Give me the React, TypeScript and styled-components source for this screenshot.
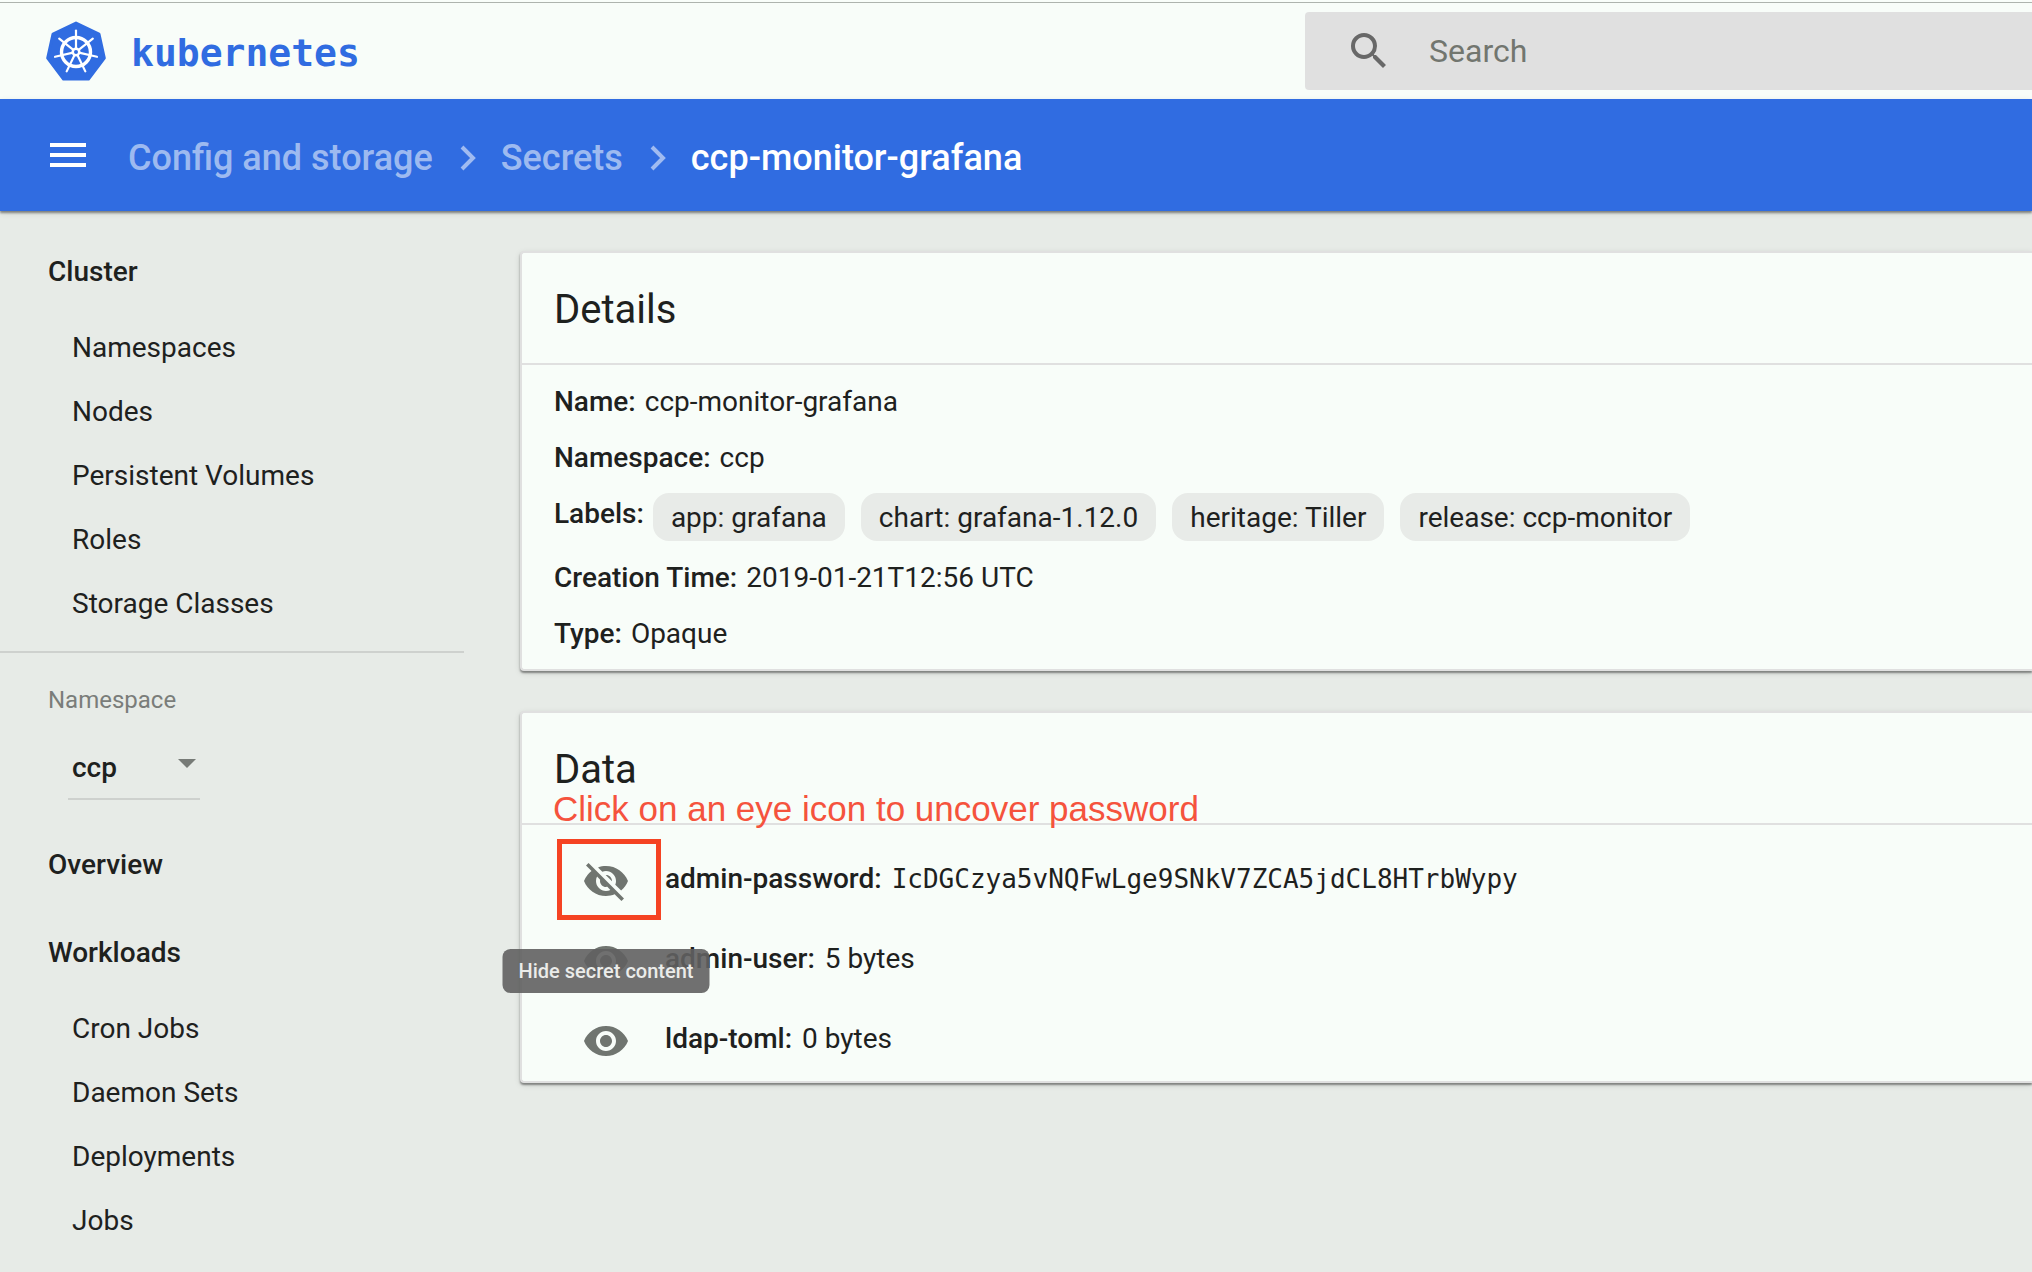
import React, { useState } from "react";
import styled, { createGlobalStyle } from "styled-components";
import { MdMenu, MdSearch, MdVisibility, MdVisibilityOff } from "react-icons/md";

const GlobalStyle = createGlobalStyle`
  *, *::before, *::after { box-sizing: border-box; }
  body {
    margin: 0;
    background: #e7ebe7;
    color: #1e211e;
    font-family: Roboto, "Liberation Sans", sans-serif;
    font-size: 28px;
    overflow: hidden;
  }
  button, input, select { font: inherit; color: inherit; }
  a { color: inherit; text-decoration: none; }
`;

const Page = styled.div`
  display: flex;
  flex-direction: column;
  height: 100vh;
  padding-top: 2px;
  background: linear-gradient(#f9fefa 2px, #e7ebe7 2px);
`;

const TopBar = styled.header`
  flex: none;
  display: flex;
  align-items: stretch;
  height: 97px;
  border-top: 1px solid #aeb4ae;
  background: #f8fdf9;
`;

const Brand = styled.a`
  flex: 0 0 1259px;
  display: flex;
  align-items: center;
  gap: 25px;
  padding-left: 46px;
  color: #306ce1;
  font: bold 38px/48px "DejaVu Sans Mono", monospace;
`;

const BrandName = styled.span`
  padding-top: 3px;
`;

const SearchBox = styled.label`
  flex: 1;
  display: flex;
  align-items: center;
  gap: 36px;
  margin: 9px 0 9px 46px;
  padding-left: 40px;
  border-radius: 4px 0 0 4px;
  background: #e0e0e0;
  color: #6b6e6b;
  font-size: 32px;

  svg { flex: none; color: #686868; }
`;

const SearchInput = styled.input`
  flex: 1;
  min-width: 0;
  padding: 0;
  border: 0;
  outline: 0;
  background: transparent;
  &::placeholder { color: #72766f; opacity: 1; }
`;

const ActionBar = styled.div`
  flex: none;
  z-index: 1;
  display: flex;
  align-items: center;
  gap: 36px;
  height: 112px;
  padding-left: 44px;
  background: #306ce1;
  box-shadow: 0 2px 2px rgba(0, 0, 0, 0.4), 0 2px 6px rgba(0, 0, 0, 0.12);
`;

const MenuButton = styled.button`
  display: flex;
  padding: 0;
  border: 0;
  background: none;
  color: #fff;
`;

const Crumbs = styled.nav`
  display: flex;
  align-items: center;
  gap: 25px;
  padding-top: 6px;
  color: rgba(255, 255, 255, 0.54);
  font-size: 36px;
  font-weight: 500;
  line-height: 48px;

  svg { flex: none; }
`;

const CurrentCrumb = styled.span`
  color: #fff;
`;

const Body = styled.div`
  flex: 1;
  min-height: 0;
  display: flex;
`;

const Sidebar = styled.nav`
  flex: 0 0 464px;
  padding-top: 17px;
`;

const NavHeading = styled.a`
  display: block;
  padding-left: 48px;
  font-weight: 500;
  line-height: 88px;
`;

const NavItem = styled.a`
  display: block;
  padding-left: 72px;
  line-height: 64px;
`;

const NamespaceSection = styled.div`
  display: flex;
  flex-direction: column;
  align-items: flex-start;
  gap: 17px;
  margin-top: 15px;
  padding: 31px 0 21px 48px;
  border-top: 2px solid #ced1ce;
`;

const NamespaceLabel = styled.label`
  color: #7a7d7a;
  font-size: 24px;
  line-height: 32px;
`;

const SelectWrap = styled.div`
  display: flex;
  align-items: center;
  width: 132px;
  height: 67px;
  margin-left: 20px;
  padding: 0 3px 3px 4px;
  border-bottom: 2px solid #ced1ce;
`;

const Select = styled.select`
  flex: 1;
  min-width: 0;
  padding: 6px 0 0;
  border: 0;
  outline: 0;
  appearance: none;
  background: transparent;
  font-weight: 500;
`;

const Content = styled.main`
  flex: 1;
  min-width: 0;
  display: flex;
  flex-direction: column;
  gap: 40px;
  padding: 40px 0 0 56px;
`;

const Card = styled.section`
  border: 2px solid #e0e0e0;
  border-right: 0;
  border-radius: 4px 0 0 4px;
  background: #f8fdf9;
  box-shadow: 0 2px 2px rgba(0, 0, 0, 0.4), 0 2px 6px rgba(0, 0, 0, 0.12);
`;

const CardTitle = styled.h2`
  margin: 0;
  padding: 4px 0 0 32px;
  border-bottom: 2px solid #e0e0e0;
  font-size: 40px;
  font-weight: 400;
  line-height: 106px;
`;

const Details = styled.dl`
  margin: 0;
  padding: 9px 32px 7px;
  line-height: 56px;
`;

const Detail = styled.div`
  display: flex;
  gap: 9px;

  dt { font-weight: 500; }
  dd { margin: 0; }
`;

const Chips = styled.dd`
  display: flex;
  flex-wrap: wrap;
  gap: 16px;
  padding: 7px 0 9px;
`;

const Chip = styled.span`
  padding: 2px 18px 0;
  border-radius: 16px;
  background: #e8ebe8;
  line-height: 46px;
`;

const SecretList = styled.div`
  padding: 16px 32px 0 44px;
`;

const Secret = styled.div`
  display: flex;
  align-items: center;
  gap: 19px;
  height: 80px;
`;

const SecretText = styled.div`
  display: flex;
  align-items: baseline;
  gap: 10px;
  padding-bottom: 5px;
`;

const SecretName = styled.span`
  font-weight: 500;
`;

const SecretValue = styled.code<{ $mono: boolean }>`
  font-family: ${(p) => (p.$mono ? '"DejaVu Sans Mono", monospace' : "inherit")};
  font-size: ${(p) => (p.$mono ? 26 : 28)}px;
`;

const EyeButton = styled.button`
  position: relative;
  flex: none;
  display: flex;
  align-items: center;
  justify-content: center;
  width: 80px;
  height: 80px;
  padding: 0;
  border: 0;
  background: none;
  color: #707570;
`;

const Tooltip = styled.span`
  position: absolute;
  z-index: 2;
  top: 108px;
  left: 50%;
  transform: translateX(-50%);
  padding: 0 16px;
  border-radius: 8px;
  background: rgba(97, 97, 97, 0.9);
  color: #ebecea;
  font-size: 20px;
  font-weight: 500;
  line-height: 44px;
  white-space: nowrap;
`;

const Highlight = styled.span`
  position: absolute;
  top: -2px;
  left: -9px;
  width: 104px;
  height: 81px;
  border: 5px solid #f54323;
`;

const TitleRow = styled.div`
  position: relative;
`;

const Note = styled.p`
  position: absolute;
  left: 31px;
  bottom: -4px;
  margin: 0;
  color: #f5533d;
  font: 35px/40px "Liberation Sans", sans-serif;
  white-space: nowrap;
`;

const SPOKES = [0, 1, 2, 3, 4, 5, 6].map((i) => (i * 360) / 7);

function Logo() {
  return (
    <svg width="60" height="60" viewBox="0 0 60 60" aria-hidden="true">
      <path
        d="M30 2 L53 13 L58.300 37 L42.500 58 H17.500 L1.700 37 L7 13 Z"
        fill="#306ce1"
        stroke="#306ce1"
        strokeWidth="3"
        strokeLinejoin="round"
      />
      <g stroke="#fff" fill="none" strokeLinecap="round">
        <circle cx="30" cy="31" r="14.500" strokeWidth="3.400" />
        {SPOKES.map((a) => (
          <path key={a} d="M30 28 V9.500" strokeWidth="2.200" transform={`rotate(${a} 30 31)`} />
        ))}
      </g>
      <circle cx="30" cy="31" r="4.500" fill="#fff" />
      <circle cx="30" cy="31" r="2" fill="#306ce1" />
    </svg>
  );
}

function Chevron() {
  return (
    <svg width="18" height="26" viewBox="0 0 18 26" aria-hidden="true">
      <path d="M4 2 L15 13 L4 24" fill="none" stroke="currentColor" strokeWidth="4" />
    </svg>
  );
}

function Caret() {
  return (
    <svg width="20" height="10" viewBox="0 0 20 10" aria-hidden="true">
      <path d="M1 0 H19 L10 9 Z" fill="#777b77" />
    </svg>
  );
}

const CLUSTER = ["Namespaces", "Nodes", "Persistent Volumes", "Roles", "Storage Classes"];
const WORKLOADS = ["Cron Jobs", "Daemon Sets", "Deployments", "Jobs"];
const LABELS = ["app: grafana", "chart: grafana-1.12.0", "heritage: Tiller", "release: ccp-monitor"];
const SECRETS = [
  { name: "admin-password", value: "IcDGCzya5vNQFwLge9SNkV7ZCA5jdCL8HTrbWypy", open: true },
  { name: "admin-user", value: "5 bytes", open: false },
  { name: "ldap-toml", value: "0 bytes", open: false },
];

function Row({ name, children }: { name: string; children: React.ReactNode }) {
  return (
    <Detail>
      <dt>{name}:</dt>
      {children}
    </Detail>
  );
}

export default function App() {
  const [query, setQuery] = useState("");
  return (
    <Page>
      <GlobalStyle />
      <TopBar>
        <Brand href="#">
          <Logo />
          <BrandName>kubernetes</BrandName>
        </Brand>
        <SearchBox>
          <MdSearch size={48} />
          <SearchInput
            aria-label="Search"
            placeholder="Search"
            value={query}
            onChange={(e) => setQuery(e.target.value)}
          />
        </SearchBox>
      </TopBar>
      <ActionBar>
        <MenuButton aria-label="Toggle menu">
          <MdMenu size={48} />
        </MenuButton>
        <Crumbs aria-label="Breadcrumb">
          <a href="#config">Config and storage</a>
          <Chevron />
          <a href="#secrets">Secrets</a>
          <Chevron />
          <CurrentCrumb>ccp-monitor-grafana</CurrentCrumb>
        </Crumbs>
      </ActionBar>
      <Body>
        <Sidebar>
          <NavHeading href="#cluster">Cluster</NavHeading>
          {CLUSTER.map((t) => (
            <NavItem key={t} href="#">{t}</NavItem>
          ))}
          <NamespaceSection>
            <NamespaceLabel htmlFor="namespace">Namespace</NamespaceLabel>
            <SelectWrap>
              <Select id="namespace" defaultValue="ccp">
                <option>ccp</option>
              </Select>
              <Caret />
            </SelectWrap>
          </NamespaceSection>
          <NavHeading href="#overview">Overview</NavHeading>
          <NavHeading href="#workloads">Workloads</NavHeading>
          {WORKLOADS.map((t) => (
            <NavItem key={t} href="#">{t}</NavItem>
          ))}
        </Sidebar>
        <Content>
          <Card>
            <CardTitle>Details</CardTitle>
            <Details>
              <Row name="Name"><dd>ccp-monitor-grafana</dd></Row>
              <Row name="Namespace"><dd>ccp</dd></Row>
              <Row name="Labels">
                <Chips>
                  {LABELS.map((l) => (
                    <Chip key={l}>{l}</Chip>
                  ))}
                </Chips>
              </Row>
              <Row name="Creation Time"><dd>2019-01-21T12:56 UTC</dd></Row>
              <Row name="Type"><dd>Opaque</dd></Row>
            </Details>
          </Card>
          <Card>
            <TitleRow>
              <CardTitle>Data</CardTitle>
              <Note>Click on an eye icon to uncover password</Note>
            </TitleRow>
            <SecretList>
              {SECRETS.map((s) => (
                <Secret key={s.name}>
                  <EyeButton aria-label={s.open ? "Hide secret content" : "Show secret content"}>
                    {s.open ? <MdVisibilityOff size={48} /> : <MdVisibility size={48} />}
                    {s.open && <Highlight />}
                    {s.open && <Tooltip role="tooltip">Hide secret content</Tooltip>}
                  </EyeButton>
                  <SecretText>
                    <SecretName>{s.name}:</SecretName>
                    <SecretValue $mono={s.open}>{s.value}</SecretValue>
                  </SecretText>
                </Secret>
              ))}
            </SecretList>
          </Card>
        </Content>
      </Body>
    </Page>
  );
}
